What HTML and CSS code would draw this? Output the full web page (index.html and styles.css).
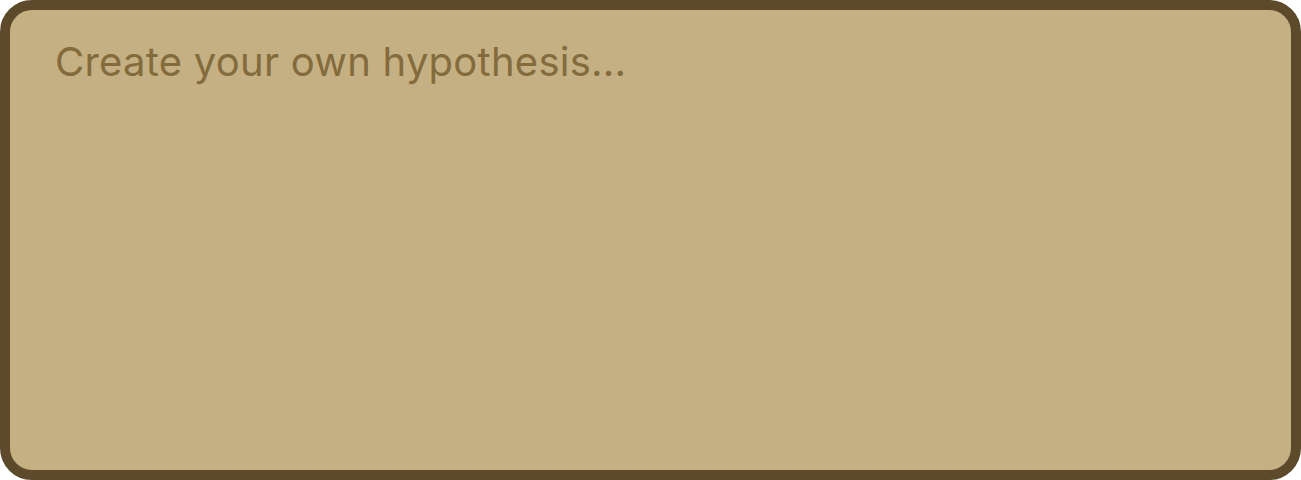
FILE: index.html
```html
<!DOCTYPE html>
<html lang="en">
<head>
<meta charset="utf-8">
<title>Hypothesis</title>
<link rel="stylesheet" href="styles.css">
</head>
<body>
<main class="page">
  <textarea class="hypothesis" placeholder="Create your own hypothesis..."></textarea>
</main>
</body>
</html>
```

FILE: styles.css
```css
html, body {
  margin: 0;
  padding: 0;
  background: #ffffff;
}
.page {
  display: flex;
  width: 1301px;
  height: 480px;
}
.hypothesis {
  flex: 1;
  box-sizing: border-box;
  margin: 0;
  resize: none;
  outline: none;
  border: 10px solid #5c4a2b;
  border-radius: 32px;
  background: #c5b084;
  padding: 28px 45px;
  font-family: Inter, "Liberation Sans", sans-serif;
  font-size: 40px;
  line-height: 48px;
  letter-spacing: 0.25px;
  color: #5c4a2b;
}
.hypothesis::placeholder {
  color: #836b3c;
  opacity: 1;
}
```
